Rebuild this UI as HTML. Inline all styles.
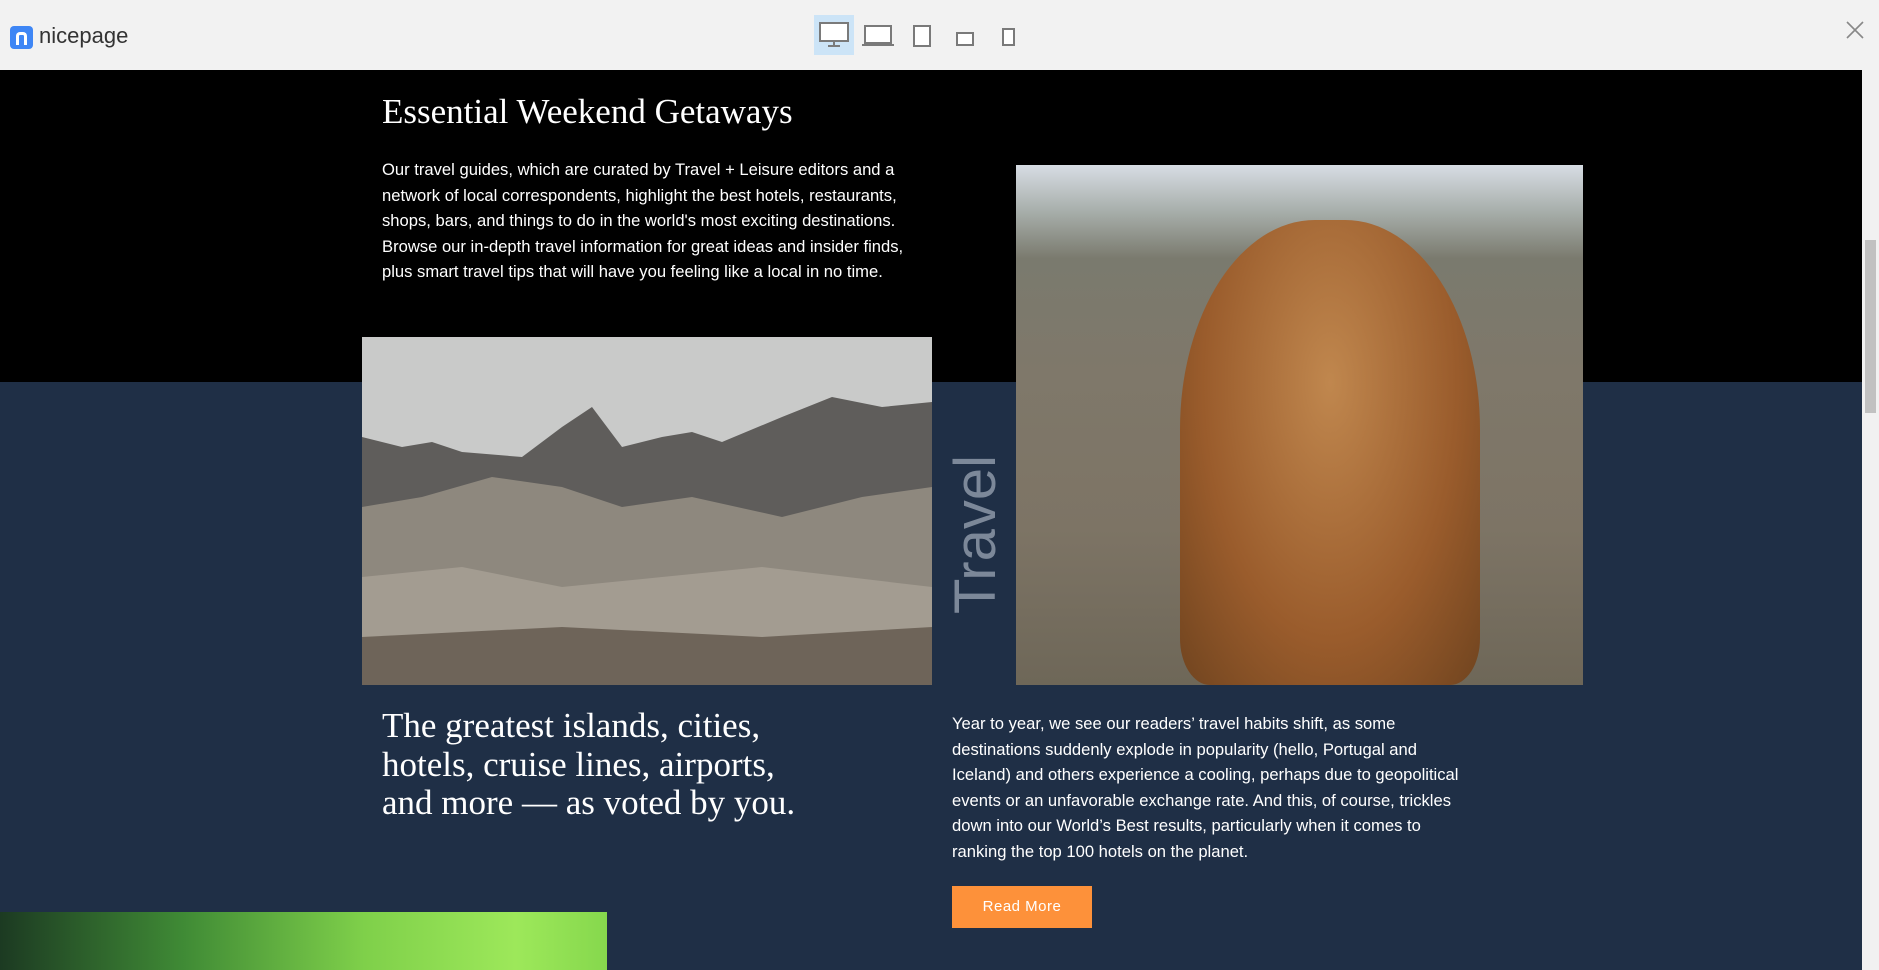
<!DOCTYPE html>
<html><head><meta charset="utf-8"><style>
*{margin:0;padding:0;box-sizing:border-box}
body{width:1879px;height:970px;overflow:hidden;background:#1f2f46;font-family:"Liberation Sans",sans-serif;position:relative}
.top{position:absolute;left:0;top:0;width:1879px;height:70px;background:#f2f2f2}
.black{position:absolute;left:0;top:70px;width:1862px;height:312px;background:#000}
.navy{position:absolute;left:0;top:382px;width:1862px;height:588px;background:#1f2f46}
.sb{position:absolute;right:0;top:70px;width:17px;height:900px;background:#f1f1f1}
.sb i{position:absolute;left:3px;top:170px;width:11px;height:173px;background:#c1c1c1}
.abs{position:absolute}
.p{color:#fff;font-size:16.6px;line-height:25.5px;white-space:nowrap}
.serif{font-family:"Liberation Serif","DejaVu Serif",serif;color:#fff}
</style></head><body>
<div class="top"></div>
<div class="abs" style="left:10px;top:26px;width:23px;height:23px;background:#3e86f5;border-radius:4px"><div style="position:absolute;left:6px;top:6px;width:11px;height:13px;border:3.5px solid #fff;border-bottom:none;border-radius:4px 4px 0 0"></div></div>
<div class="abs" style="left:39px;top:23px;font-size:22px;color:#333">nicepage</div>
<div class="abs" style="left:814px;top:15px;width:40px;height:40px;background:#cce4f7"></div>
<svg class="abs" style="left:800px;top:10px" width="230" height="50" viewBox="0 0 230 50" fill="none" stroke="#7a7a7a" stroke-width="2">
<rect x="20" y="13" width="28" height="18" fill="#fff"/><path d="M34 31v4M28 36h12"/>
<rect x="65" y="16" width="26" height="17" fill="#fff"/><path d="M62 35h32"/>
<rect x="114" y="16" width="16" height="20" fill="#fff"/>
<rect x="157" y="23" width="16" height="12" fill="#fff"/>
<rect x="203" y="19" width="11" height="16" fill="#fff"/></svg>
<svg class="abs" style="left:1845px;top:20px" width="20" height="20" stroke="#888" stroke-width="1.6"><path d="M2 2L18 18M18 2L2 18"/></svg>
<div class="black"></div><div class="navy"></div>
<div class="sb"><i></i></div>
<div class="abs serif" style="left:382px;top:92px;font-size:35px">Essential Weekend Getaways</div>
<div class="abs p" style="left:382px;top:157px">Our travel guides, which are curated by Travel + Leisure editors and a<br>network of local correspondents, highlight the best hotels, restaurants,<br>shops, bars, and things to do in the world's most exciting destinations.<br>Browse our in-depth travel information for great ideas and insider finds,<br>plus smart travel tips that will have you feeling like a local in no time.</div>
<svg class="abs" style="left:362px;top:337px" width="570" height="348" viewBox="0 0 570 348">
<rect width="570" height="348" fill="#c9cac9"/>
<path d="M0 100L40 110L70 105L100 115L160 120L200 90L230 70L260 110L300 100L330 95L360 105L420 80L470 60L520 70L570 65V348H0Z" fill="#5f5d5b"/>
<path d="M0 170L60 160L130 140L200 150L260 170L330 160L420 180L500 160L570 150V348H0Z" fill="#8e887e"/>
<path d="M0 240L100 230L200 250L300 240L400 230L570 250V348H0Z" fill="#a39c91"/>
<path d="M0 300L200 290L400 300L570 290V348H0Z" fill="#6e6459"/></svg>
<div class="abs" style="left:1016px;top:165px;width:567px;height:520px;background:linear-gradient(180deg,#d7dde4 0%,#a7aeaa 9%,#7a7a6e 18%,#7f786a 40%,#7d7465 70%,#6e6758 100%)"></div>
<div class="abs" style="left:1180px;top:220px;width:300px;height:465px;border-radius:45% 45% 10% 10%;background:radial-gradient(ellipse at 50% 35%,#c0874e,#9a5c2c 60%,#70441f)"></div>
<div class="abs" style="left:942px;top:614px;transform:rotate(-90deg);transform-origin:left top;font-size:58px;color:#7c8899">Travel</div>
<div class="abs serif" style="left:382px;top:707px;font-size:35px;line-height:38.5px;white-space:nowrap">The greatest islands, cities,<br>hotels, cruise lines, airports,<br>and more — as voted by you.</div>
<div class="abs p" style="left:952px;top:711px">Year to year, we see our readers’ travel habits shift, as some<br>destinations suddenly explode in popularity (hello, Portugal and<br>Iceland) and others experience a cooling, perhaps due to geopolitical<br>events or an unfavorable exchange rate. And this, of course, trickles<br>down into our World’s Best results, particularly when it comes to<br>ranking the top 100 hotels on the planet.</div>
<div class="abs" style="left:952px;top:886px;width:140px;height:42px;background:#fd913a;color:#fff;font-size:15px;text-align:center;line-height:42px;letter-spacing:.5px">Read More</div>
<div class="abs" style="left:0;top:912px;width:607px;height:58px;background:linear-gradient(90deg,#1c3a22 0%,#3f8a35 30%,#7fd04a 60%,#9de85a 85%,#86d84d 100%)"></div>
</body></html>
